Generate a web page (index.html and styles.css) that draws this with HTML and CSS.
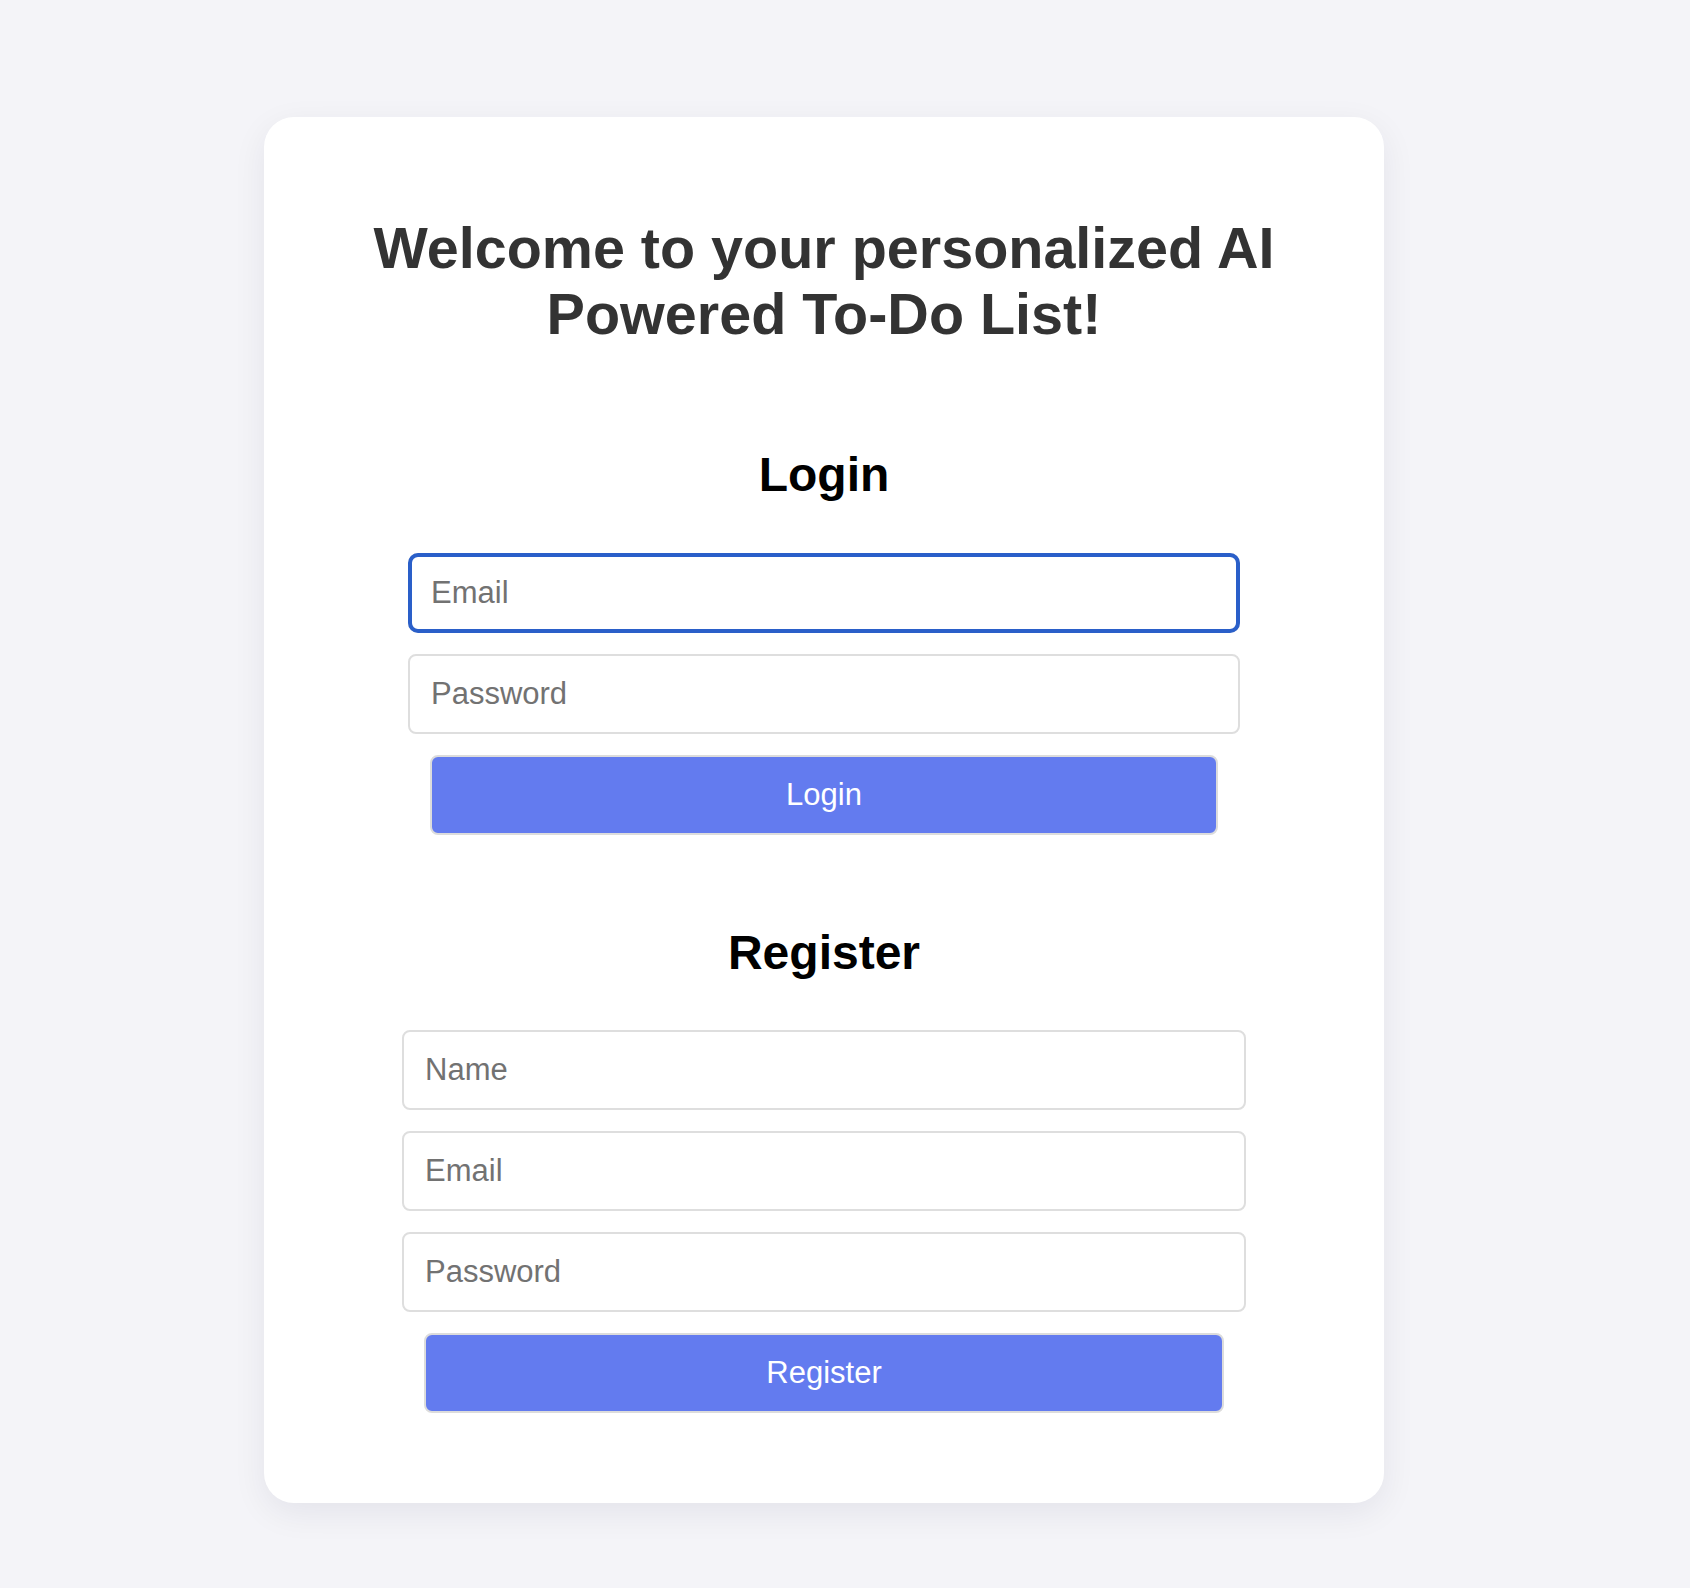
FILE: index.html
```html
<!DOCTYPE html>
<html lang="en">
<head>
<meta charset="utf-8">
<title>AI Powered To-Do List</title>
<link rel="stylesheet" href="styles.css">
</head>
<body>
<div class="page">
  <main class="card">
    <h1 class="title">Welcome to your personalized AI Powered To-Do List!</h1>

    <section class="section section-login">
      <h2 class="section-title">Login</h2>
      <form class="form form-login">
        <input class="field field-focus" type="email" placeholder="Email">
        <input class="field" type="password" placeholder="Password">
        <button class="btn" type="button">Login</button>
      </form>
    </section>

    <section class="section section-register">
      <h2 class="section-title">Register</h2>
      <form class="form form-register">
        <input class="field" type="text" placeholder="Name">
        <input class="field" type="email" placeholder="Email">
        <input class="field" type="password" placeholder="Password">
        <button class="btn" type="button">Register</button>
      </form>
    </section>
  </main>
</div>
</body>
</html>
```

FILE: styles.css
```css
* {
  box-sizing: border-box;
}

html, body {
  margin: 0;
  padding: 0;
}

body {
  background: #f4f4f8;
  font-family: "Liberation Sans", Arial, Helvetica, sans-serif;
  min-height: 1588px;
}

.page {
  padding-top: 117px;
  padding-left: 264px;
  padding-bottom: 86px;
}

.card {
  width: 1120px;
  background: #ffffff;
  border-radius: 30px;
  box-shadow: 0 10px 34px rgba(20, 20, 60, 0.07);
  padding: 98px 80px 90px;
  display: flex;
  flex-direction: column;
  align-items: center;
}

.title {
  margin: 0;
  font-size: 57.5px;
  line-height: 66px;
  font-weight: 700;
  color: #333333;
  text-align: center;
}

.section {
  display: flex;
  flex-direction: column;
  align-items: center;
}

.section-login {
  margin-top: 100px;
}

.section-register {
  margin-top: 90px;
}

.section-title {
  margin: 0;
  font-size: 48px;
  line-height: 56px;
  font-weight: 700;
  color: #000000;
  text-align: center;
}

.form {
  margin-top: 50px;
  display: flex;
  flex-direction: column;
  align-items: center;
  gap: 21px;
}

.form-register {
  margin-top: 49px;
}

.form-login .field {
  width: 832px;
}

.form-login .btn {
  width: 788px;
}

.form-register .field {
  width: 844px;
}

.form-register .btn {
  width: 800px;
}

.field {
  height: 80px;
  margin: 0;
  padding: 0 21px;
  border: 2px solid #dedede;
  border-radius: 8px;
  background: #ffffff;
  font-family: "Liberation Sans", Arial, Helvetica, sans-serif;
  font-size: 31px;
  color: #222222;
  outline: none;
}

.field::placeholder {
  color: #727272;
}

.field-focus {
  outline: 4px solid #2a5fc9;
  outline-offset: -4px;
  border-radius: 10px;
}

.btn {
  height: 80px;
  margin: 0;
  padding: 0;
  border: 2px solid #dcdcdc;
  border-radius: 8px;
  background: #637bef;
  color: #ffffff;
  font-family: "Liberation Sans", Arial, Helvetica, sans-serif;
  font-size: 31px;
  cursor: pointer;
}
```
